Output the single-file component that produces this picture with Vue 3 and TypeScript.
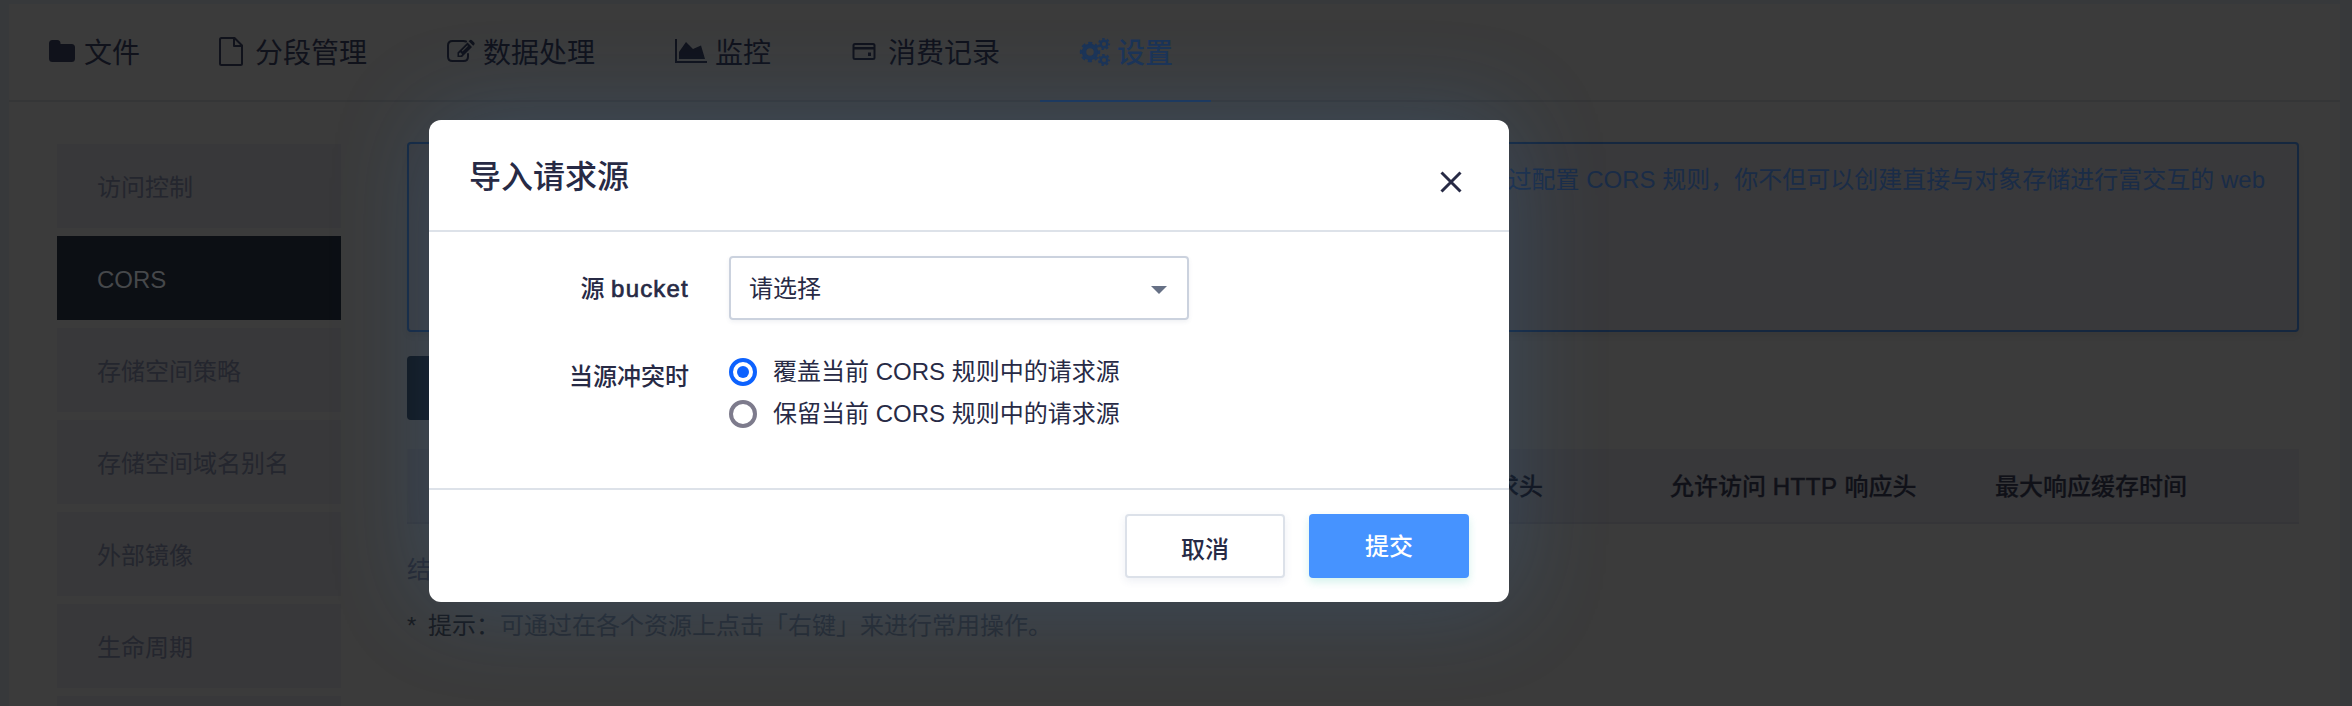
<script setup lang="ts">
import { ref } from 'vue'

type IconName = 'folder' | 'file' | 'edit' | 'chart' | 'wallet' | 'gears'
interface Tab {
  icon: IconName
  label: string
}

const tabs: Tab[] = [
  { icon: 'folder', label: '文件' },
  { icon: 'file', label: '分段管理' },
  { icon: 'edit', label: '数据处理' },
  { icon: 'chart', label: '监控' },
  { icon: 'wallet', label: '消费记录' },
  { icon: 'gears', label: '设置' },
]
const activeTab = ref<IconName>('gears')

const menu: string[] = ['访问控制', 'CORS', '存储空间策略', '存储空间域名别名', '外部镜像', '生命周期', '']
const activeMenu = ref('CORS')

const options: string[] = ['覆盖当前 CORS 规则中的请求源', '保留当前 CORS 规则中的请求源']
const chosen = ref(0)
</script>

<template>
  <div class="page">
    <div class="card">
      <nav class="tabs">
        <div v-for="t in tabs" :key="t.icon" class="tab" :class="[t.icon, { active: t.icon === activeTab }]">
          <svg v-if="t.icon === 'folder'" class="icon" width="27" height="28" viewBox="0 0 27 28">
            <path d="M0 5.5Q0 2 3.5 2H8Q11.500 2 11.500 5.500V6H22.500Q26 6 26 9.500V20.500Q26 24 22.500 24H3.500Q0 24 0 20.500Z" fill="currentColor" />
          </svg>
          <svg v-else-if="t.icon === 'file'" class="icon" width="26" height="30" viewBox="0 0 26 30">
            <path d="M0 2.500Q0 1 1.500 1H14.500L22 8.500V26.500Q22 28 20.500 28H1.500Q0 28 0 26.500ZM14 1V9H22" fill="none" stroke="currentColor" stroke-width="2" stroke-linejoin="round" overflow="visible" />
          </svg>
          <svg v-else-if="t.icon === 'edit'" class="icon" width="28" height="28" viewBox="0 0 28 28">
            <path d="M19 3.500Q18 3 16.500 3H5.500Q1 3 1 7.500V18.500Q1 23 5.500 23H16.500Q21 23 21 18.500V16" fill="none" stroke="currentColor" stroke-width="2" stroke-linecap="round" />
            <path fill-rule="evenodd" d="M20.500 4.500L25 9L15 19H10.500V14.500ZM12 15.500V17.500H14L15.200 16.300L13.200 14.300ZM20.300 7.200L14.800 12.700L15.500 13.400L21 7.900ZM21.700 3.300L22.700 2.300Q23.800 1.200 24.900 2.300L27.200 4.600Q28.200 5.700 27.200 6.800L26.200 7.800Z" fill="currentColor" />
          </svg>
          <svg v-else-if="t.icon === 'chart'" class="icon" width="32" height="28" viewBox="0 0 32 28">
            <path d="M0 1H2V23H32V25H0ZM4 21V14L11 4L18 11L26 7.500L30 21Z" fill="currentColor" />
          </svg>
          <svg v-else-if="t.icon === 'wallet'" class="icon" width="26" height="28" viewBox="0 0 26 28">
            <path fill-rule="evenodd" d="M1.500 7.500Q1.500 5 4 5H22Q24.500 5 24.500 7.500V19.500Q24.500 22 22 22H4Q1.500 22 1.500 19.500ZM3.500 7.500V9H22.500V7.500Q22.500 7 22 7H4Q3.500 7 3.500 7.500ZM3.500 11.500V19.500Q3.500 20 4 20H22Q22.500 20 22.500 19.500V11.500ZM17 14.500H20V18H17Z" fill="currentColor" />
          </svg>
          <svg v-else class="icon" width="30" height="30" viewBox="0 0 30 30">
            <g fill="none" stroke="currentColor">
              <circle cx="10" cy="15" r="6" stroke-width="4.500" />
              <circle cx="10" cy="15" r="8.800" stroke-width="2.800" stroke-dasharray="4 2.910" stroke-dashoffset="2" />
              <circle cx="24" cy="7" r="3.300" stroke-width="2.400" />
              <circle cx="24" cy="7" r="5.200" stroke-width="1.800" stroke-dasharray="2.400 2.260" stroke-dashoffset="1.200" />
              <circle cx="24" cy="23" r="3.300" stroke-width="2.400" />
              <circle cx="24" cy="23" r="5.200" stroke-width="1.800" stroke-dasharray="2.400 2.260" stroke-dashoffset="1.200" />
            </g>
          </svg>
          <span class="tab-text">{{ t.label }}</span>
        </div>
      </nav>

      <div class="body">
        <aside class="side">
          <div v-for="m in menu" :key="m" class="side-item" :class="{ on: m === activeMenu }">{{ m }}</div>
        </aside>
        <main class="main">
          <div class="alert">过配置 CORS 规则，你不但可以创建直接与对象存储进行富交互的 web</div>
          <div class="action"></div>
          <div class="thead">
            <span class="th th-req">求头</span>
            <span class="th th-res">允许访问 <span class="http">HTTP</span> 响应头</span>
            <span class="th th-age">最大响应缓存时间</span>
          </div>
          <div class="empty">结</div>
          <div class="hint"><span class="hint-key">* 提示：</span>可通过在各个资源上点击「右键」来进行常用操作。</div>
        </main>
      </div>
    </div>

    <div class="modal" role="dialog">
      <header class="modal-head">
        <h2>导入请求源</h2>
        <svg class="close" width="22" height="22" viewBox="0 0 22 22">
          <path d="M1.500 1.500L20.500 20.500M20.500 1.500L1.500 20.500" stroke="#272a45" stroke-width="3" fill="none" />
        </svg>
      </header>
      <section class="modal-body">
        <div class="row">
          <label class="label">源 <span class="latin">bucket</span></label>
          <div class="select">
            <span class="select-text">请选择</span>
            <svg width="16" height="8" viewBox="0 0 16 8"><path d="M0 0H16L8 8Z" fill="#667085" /></svg>
          </div>
        </div>
        <div class="row second">
          <label class="label">当源冲突时</label>
          <div class="radios">
            <div v-for="(o, i) in options" :key="o" class="radio" @click="chosen = i">
              <i class="dot" :class="{ checked: chosen === i }"></i>
              <span class="radio-text">{{ o }}</span>
            </div>
          </div>
        </div>
      </section>
      <footer class="modal-foot">
        <button class="btn cancel">取消</button>
        <button class="btn submit">提交</button>
      </footer>
    </div>
  </div>
</template>

<style>
html,
body {
  margin: 0;
  overflow: hidden;
}
</style>

<style scoped>
* {
  box-sizing: border-box;
}
.page {
  position: relative;
  width: 2352px;
  height: 706px;
  overflow: hidden;
  padding: 4px 12px 0 9px;
  background: #37393b;
  font-family: 'Liberation Sans', 'Noto Sans CJK SC', sans-serif;
  font-size: 24px;
  color: #25272f;
}
.card {
  height: 720px;
  background: #3b3b3b;
}
.tabs {
  display: flex;
  height: 98px;
  border-bottom: 2px solid #353637;
}
.tab {
  display: flex;
  align-items: center;
  height: 98px;
  padding: 0 40px;
  font-size: 28px;
  line-height: 40px;
  color: #10121b;
  white-space: nowrap;
  border-bottom: 2px solid transparent;
}
.tab-text {
  padding-top: 3px;
}
.icon {
  flex: none;
  margin-right: 8px;
  overflow: visible;
}
.file .icon {
  margin-right: 9px;
}
.wallet .icon {
  margin-right: 11px;
}
.tab.chart .icon {
  margin-right: 8px;
}
.gears .icon {
  margin-right: 7px;
}
.tab.active {
  padding-right: 38px;
  color: #1b3356;
  border-bottom-color: #1b3356;
  font-weight: 500;
}
.body {
  display: flex;
  padding: 40px 41px 0 48px;
}
.side {
  display: flex;
  flex-direction: column;
  gap: 8px;
  width: 284px;
  margin: 2px 66px 0 0;
}
.side-item {
  flex: none;
  height: 84px;
  padding-left: 40px;
  line-height: 87px;
  background: #38383a;
  color: #24262e;
}
.side-item.on {
  background: #0c0f14;
  color: #46484b;
}
.main {
  flex: 1;
  min-width: 0;
}
.alert {
  height: 190px;
  padding: 18px 32px 0 0;
  border: 2px solid #15273f;
  border-radius: 4px;
  background: #39393b;
  box-shadow: 0 4px 6px rgba(0, 0, 0, 0.06);
  color: #1a2c47;
  line-height: 36px;
  text-align: right;
  white-space: nowrap;
}
.action {
  width: 160px;
  height: 64px;
  margin-top: 24px;
  border-radius: 4px;
  background: #10151b;
}
.thead {
  display: grid;
  grid-template-columns: 1263px 325px 1fr;
  height: 75px;
  margin-top: 29px;
  line-height: 75px;
  background: #38383a;
  border-bottom: 2px solid #353538;
  font-weight: 500;
  color: #101118;
  -webkit-text-stroke: 0.2px #101118;
}
.http {
  letter-spacing: 0.6px;
  -webkit-text-stroke: 0.6px #101118;
}
.th-req {
  width: 1136px;
  text-align: right;
}
.empty {
  margin-top: 28px;
  line-height: 36px;
}
.hint {
  margin-top: 20px;
  line-height: 36px;
  color: #26292e;
}
.hint-key {
  color: #17191d;
  word-spacing: 5px;
}

.modal {
  position: absolute;
  left: 429px;
  top: 120px;
  display: flex;
  flex-direction: column;
  width: 1080px;
  height: 482px;
  border-radius: 12px;
  background: #fff;
  box-shadow: 0 0 100px rgba(70, 140, 220, 0.22);
  color: #272a45;
}
.modal-head {
  display: flex;
  justify-content: space-between;
  height: 112px;
  padding: 34px 47px 0 40px;
  border-bottom: 2px solid #dde2e9;
}
.modal-head h2 {
  margin: 0;
  font-size: 32px;
  font-weight: 500;
  line-height: 47px;
}
.close {
  margin-top: 17px;
}
.modal-body {
  height: 256px;
  padding-top: 24px;
}
.row {
  display: flex;
}
.label {
  width: 260px;
  margin-right: 40px;
  line-height: 66px;
  text-align: right;
  font-weight: 500;
}
.latin {
  letter-spacing: 1.2px;
  -webkit-text-stroke: 0.7px #272a45;
}
.select {
  display: flex;
  align-items: center;
  justify-content: space-between;
  width: 460px;
  height: 64px;
  margin-bottom: 2px;
  padding: 0 20px 0 18px;
  border: 2px solid #cbd2de;
  border-radius: 4px;
  box-shadow: 0 2px 4px rgba(60, 80, 120, 0.08);
}
.select-text {
  padding-bottom: 3px;
}
.select svg {
  margin-top: 3px;
}
.second {
  margin-top: 34px;
}
.second .label {
  line-height: 42px;
}
.radios {
  display: flex;
  flex-direction: column;
  gap: 6px;
  margin-top: -3px;
}
.radio {
  display: flex;
  align-items: center;
  height: 36px;
  white-space: nowrap;
}
.radio-text {
  padding-bottom: 4px;
}
.dot {
  display: flex;
  align-items: center;
  justify-content: center;
  width: 28px;
  height: 28px;
  margin: 1px 16px 0 0;
  border: 4px solid #7d7b8c;
  border-radius: 50%;
}
.dot.checked {
  border-color: #0d62fe;
}
.dot.checked::after {
  content: '';
  width: 12px;
  height: 12px;
  border-radius: 50%;
  background: #0d62fe;
}
.modal-foot {
  display: flex;
  justify-content: flex-end;
  gap: 24px;
  height: 114px;
  padding: 24px 40px 0 0;
  border-top: 2px solid #dde2e9;
}
.btn {
  width: 160px;
  height: 64px;
  padding: 0;
  border: 0;
  border-radius: 4px;
  font: inherit;
  font-weight: 500;
  line-height: 60px;
}
.cancel {
  padding-top: 4px;
  border: 2px solid #dce1e9;
  background: #fff;
  color: #272a45;
  box-shadow: 0 3px 8px rgba(60, 80, 130, 0.09);
}
.submit {
  padding-top: 1px;
  background: #4693ff;
  color: #fff;
  box-shadow: 0 4px 8px rgba(40, 190, 160, 0.2);
}
</style>
